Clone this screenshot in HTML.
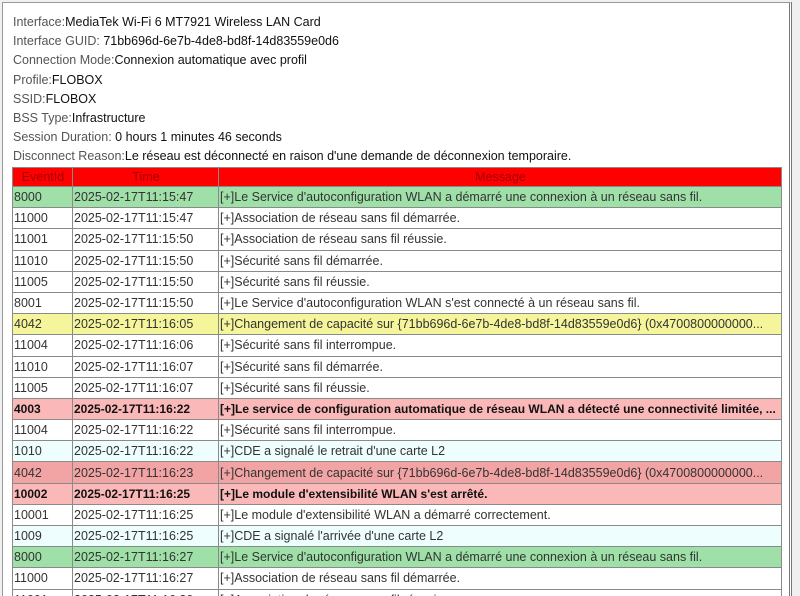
<!DOCTYPE html>
<html><head><meta charset="utf-8"><style>
html,body{margin:0;padding:0;width:800px;height:596px;overflow:hidden;}
body{background:#f0f0f0;position:relative;font-family:"Liberation Sans",sans-serif;font-size:12.5px;}
.box{position:absolute;left:2px;top:2px;width:786px;height:600px;background:#fff;border-left:1px solid #999;border-top:1px solid #999;border-right:3px double #777;}
.info{position:absolute;left:13px;top:13px;line-height:19.2px;color:#111;}
.info span{color:#555;}
table{position:absolute;left:12px;top:167px;width:770px;border-collapse:collapse;table-layout:fixed;}
td,th{border:1px solid #8a8a8a;padding:0 0 0 1px;height:20.2px;white-space:nowrap;overflow:hidden;color:#333;font-weight:normal;text-align:left;}
th{background:#ff0000;color:#a00000;text-align:center;height:18px;}
.g td{background:#9fe0a8;}
.y td{background:#f5f59c;}
.p td{background:#fbb8b8;color:#111;font-weight:bold;font-size:12px;}
.r td{background:#f2a4a4;}
.c td{background:#eefdfd;}
</style></head><body>
<div class="box"></div>
<div class="info">
<div><span>Interface:</span>MediaTek Wi-Fi 6 MT7921 Wireless LAN Card</div>
<div><span>Interface GUID: </span>71bb696d-6e7b-4de8-bd8f-14d83559e0d6</div>
<div><span>Connection Mode:</span>Connexion automatique avec profil</div>
<div><span>Profile:</span>FLOBOX</div>
<div><span>SSID:</span>FLOBOX</div>
<div><span>BSS Type:</span>Infrastructure</div>
<div><span>Session Duration: </span>0 hours 1 minutes 46 seconds</div>
<div><span>Disconnect Reason:</span>Le réseau est déconnecté en raison d'une demande de déconnexion temporaire.</div>
</div>
<table>
<colgroup><col style="width:60px"><col style="width:146px"><col></colgroup>
<tr><th>EventId</th><th>Time</th><th>Message</th></tr>
<tr class="g"><td>8000</td><td>2025-02-17T11:15:47</td><td>[+]Le Service d'autoconfiguration WLAN a démarré une connexion à un réseau sans fil.</td></tr>
<tr><td>11000</td><td>2025-02-17T11:15:47</td><td>[+]Association de réseau sans fil démarrée.</td></tr>
<tr><td>11001</td><td>2025-02-17T11:15:50</td><td>[+]Association de réseau sans fil réussie.</td></tr>
<tr><td>11010</td><td>2025-02-17T11:15:50</td><td>[+]Sécurité sans fil démarrée.</td></tr>
<tr><td>11005</td><td>2025-02-17T11:15:50</td><td>[+]Sécurité sans fil réussie.</td></tr>
<tr><td>8001</td><td>2025-02-17T11:15:50</td><td>[+]Le Service d'autoconfiguration WLAN s'est connecté à un réseau sans fil.</td></tr>
<tr class="y"><td>4042</td><td>2025-02-17T11:16:05</td><td>[+]Changement de capacité sur {71bb696d-6e7b-4de8-bd8f-14d83559e0d6} (0x4700800000000...</td></tr>
<tr><td>11004</td><td>2025-02-17T11:16:06</td><td>[+]Sécurité sans fil interrompue.</td></tr>
<tr><td>11010</td><td>2025-02-17T11:16:07</td><td>[+]Sécurité sans fil démarrée.</td></tr>
<tr><td>11005</td><td>2025-02-17T11:16:07</td><td>[+]Sécurité sans fil réussie.</td></tr>
<tr class="p"><td>4003</td><td>2025-02-17T11:16:22</td><td>[+]Le service de configuration automatique de réseau WLAN a détecté une connectivité limitée, ...</td></tr>
<tr><td>11004</td><td>2025-02-17T11:16:22</td><td>[+]Sécurité sans fil interrompue.</td></tr>
<tr class="c"><td>1010</td><td>2025-02-17T11:16:22</td><td>[+]CDE a signalé le retrait d'une carte L2</td></tr>
<tr class="r"><td>4042</td><td>2025-02-17T11:16:23</td><td>[+]Changement de capacité sur {71bb696d-6e7b-4de8-bd8f-14d83559e0d6} (0x4700800000000...</td></tr>
<tr class="p"><td>10002</td><td>2025-02-17T11:16:25</td><td>[+]Le module d'extensibilité WLAN s'est arrêté.</td></tr>
<tr><td>10001</td><td>2025-02-17T11:16:25</td><td>[+]Le module d'extensibilité WLAN a démarré correctement.</td></tr>
<tr class="c"><td>1009</td><td>2025-02-17T11:16:25</td><td>[+]CDE a signalé l'arrivée d'une carte L2</td></tr>
<tr class="g"><td>8000</td><td>2025-02-17T11:16:27</td><td>[+]Le Service d'autoconfiguration WLAN a démarré une connexion à un réseau sans fil.</td></tr>
<tr><td>11000</td><td>2025-02-17T11:16:27</td><td>[+]Association de réseau sans fil démarrée.</td></tr>
<tr><td>11001</td><td>2025-02-17T11:16:30</td><td>[+]Association de réseau sans fil réussie.</td></tr>
</table>
</body></html>
